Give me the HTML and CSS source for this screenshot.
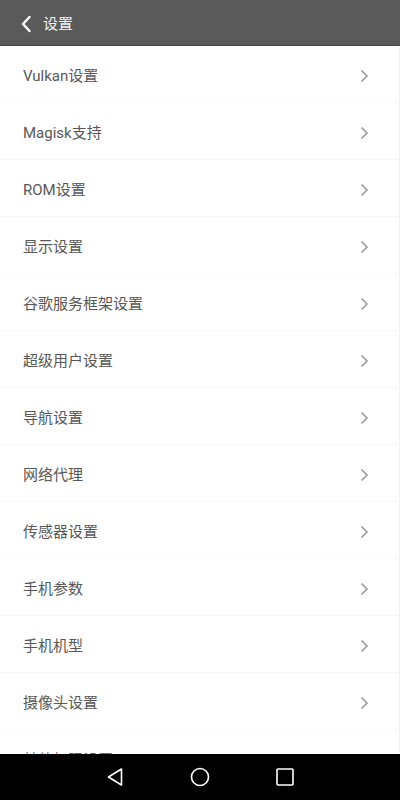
FILE: index.html
```html
<!DOCTYPE html>
<html lang="zh-CN">
<head>
<meta charset="utf-8">
<title>设置</title>
<link rel="stylesheet" href="styles.css">
</head>
<body>
<div class="app">
  <header class="topbar">
    <svg class="back" width="12" height="18" viewBox="0 0 12 18"><path d="M9.5 2 L3 9 L9.5 16" fill="none" stroke="#fff" stroke-width="2.4" stroke-linecap="round" stroke-linejoin="round"/></svg>
    <span class="title">设置</span>
  </header>
  <main class="list">
    <div class="row"><span class="label">Vulkan设置</span><svg class="chev" width="9" height="14" viewBox="0 0 9 14"><path d="M1.5 1.5 L7 7 L1.5 12.5" fill="none" stroke="#9a9a9a" stroke-width="1.6"/></svg></div>
    <div class="row"><span class="label">Magisk支持</span><svg class="chev" width="9" height="14" viewBox="0 0 9 14"><path d="M1.5 1.5 L7 7 L1.5 12.5" fill="none" stroke="#9a9a9a" stroke-width="1.6"/></svg></div>
    <div class="row"><span class="label">ROM设置</span><svg class="chev" width="9" height="14" viewBox="0 0 9 14"><path d="M1.5 1.5 L7 7 L1.5 12.5" fill="none" stroke="#9a9a9a" stroke-width="1.6"/></svg></div>
    <div class="row"><span class="label">显示设置</span><svg class="chev" width="9" height="14" viewBox="0 0 9 14"><path d="M1.5 1.5 L7 7 L1.5 12.5" fill="none" stroke="#9a9a9a" stroke-width="1.6"/></svg></div>
    <div class="row"><span class="label">谷歌服务框架设置</span><svg class="chev" width="9" height="14" viewBox="0 0 9 14"><path d="M1.5 1.5 L7 7 L1.5 12.5" fill="none" stroke="#9a9a9a" stroke-width="1.6"/></svg></div>
    <div class="row"><span class="label">超级用户设置</span><svg class="chev" width="9" height="14" viewBox="0 0 9 14"><path d="M1.5 1.5 L7 7 L1.5 12.5" fill="none" stroke="#9a9a9a" stroke-width="1.6"/></svg></div>
    <div class="row"><span class="label">导航设置</span><svg class="chev" width="9" height="14" viewBox="0 0 9 14"><path d="M1.5 1.5 L7 7 L1.5 12.5" fill="none" stroke="#9a9a9a" stroke-width="1.6"/></svg></div>
    <div class="row"><span class="label">网络代理</span><svg class="chev" width="9" height="14" viewBox="0 0 9 14"><path d="M1.5 1.5 L7 7 L1.5 12.5" fill="none" stroke="#9a9a9a" stroke-width="1.6"/></svg></div>
    <div class="row"><span class="label">传感器设置</span><svg class="chev" width="9" height="14" viewBox="0 0 9 14"><path d="M1.5 1.5 L7 7 L1.5 12.5" fill="none" stroke="#9a9a9a" stroke-width="1.6"/></svg></div>
    <div class="row"><span class="label">手机参数</span><svg class="chev" width="9" height="14" viewBox="0 0 9 14"><path d="M1.5 1.5 L7 7 L1.5 12.5" fill="none" stroke="#9a9a9a" stroke-width="1.6"/></svg></div>
    <div class="row"><span class="label">手机机型</span><svg class="chev" width="9" height="14" viewBox="0 0 9 14"><path d="M1.5 1.5 L7 7 L1.5 12.5" fill="none" stroke="#9a9a9a" stroke-width="1.6"/></svg></div>
    <div class="row"><span class="label">摄像头设置</span><svg class="chev" width="9" height="14" viewBox="0 0 9 14"><path d="M1.5 1.5 L7 7 L1.5 12.5" fill="none" stroke="#9a9a9a" stroke-width="1.6"/></svg></div>
    <div class="row"><span class="label">其他权限设置</span><svg class="chev" width="9" height="14" viewBox="0 0 9 14"><path d="M1.5 1.5 L7 7 L1.5 12.5" fill="none" stroke="#9a9a9a" stroke-width="1.6"/></svg></div>
  </main>
  <nav class="navbar">
    <svg width="18" height="20" viewBox="0 0 18 20"><path d="M15.5 2 L2.5 10 L15.5 18 Z" fill="none" stroke="#fff" stroke-width="1.6" stroke-linejoin="round"/></svg>
    <svg width="20" height="20" viewBox="0 0 20 20"><circle cx="10" cy="10" r="8.5" fill="none" stroke="#fff" stroke-width="1.6"/></svg>
    <svg width="18" height="18" viewBox="0 0 18 18"><rect x="1" y="1" width="16" height="16" rx="1" fill="none" stroke="#fff" stroke-width="1.6"/></svg>
  </nav>
</div>
</body>
</html>
```
FILE: styles.css
```css
* { box-sizing: border-box; }
html, body { margin: 0; padding: 0; }
body {
  font-family: Roboto, "Noto Sans CJK SC", sans-serif;
  background: #fff;
}
.app {
  width: 400px;
  height: 800px;
  display: flex;
  flex-direction: column;
  overflow: hidden;
}
.topbar {
  height: 46px;
  flex: none;
  background: #5a5a5a;
  border-bottom: 1px solid #474747;
  display: flex;
  align-items: center;
  padding: 3px 0 0 20px;
  gap: 11px;
}
.back { display: block; }
.title {
  color: #f2f2f2;
  font-size: 15px;
  line-height: 20px;
}
.list {
  flex: 1;
  overflow: hidden;
  border-right: 1px solid #f2f2f2;
}
.row {
  height: 57px;
  display: flex;
  align-items: center;
  justify-content: space-between;
  padding: 4px 30px 0 23px;
  border-bottom: 1px solid #f7f7f7;
}
.label {
  color: #585858;
  font-size: 15px;
  line-height: 20px;
}
.chev { display: block; }
.navbar {
  height: 46px;
  flex: none;
  background: #000;
  display: flex;
  align-items: center;
  justify-content: center;
  gap: 66px;
}
.navbar svg { display: block; }
```
